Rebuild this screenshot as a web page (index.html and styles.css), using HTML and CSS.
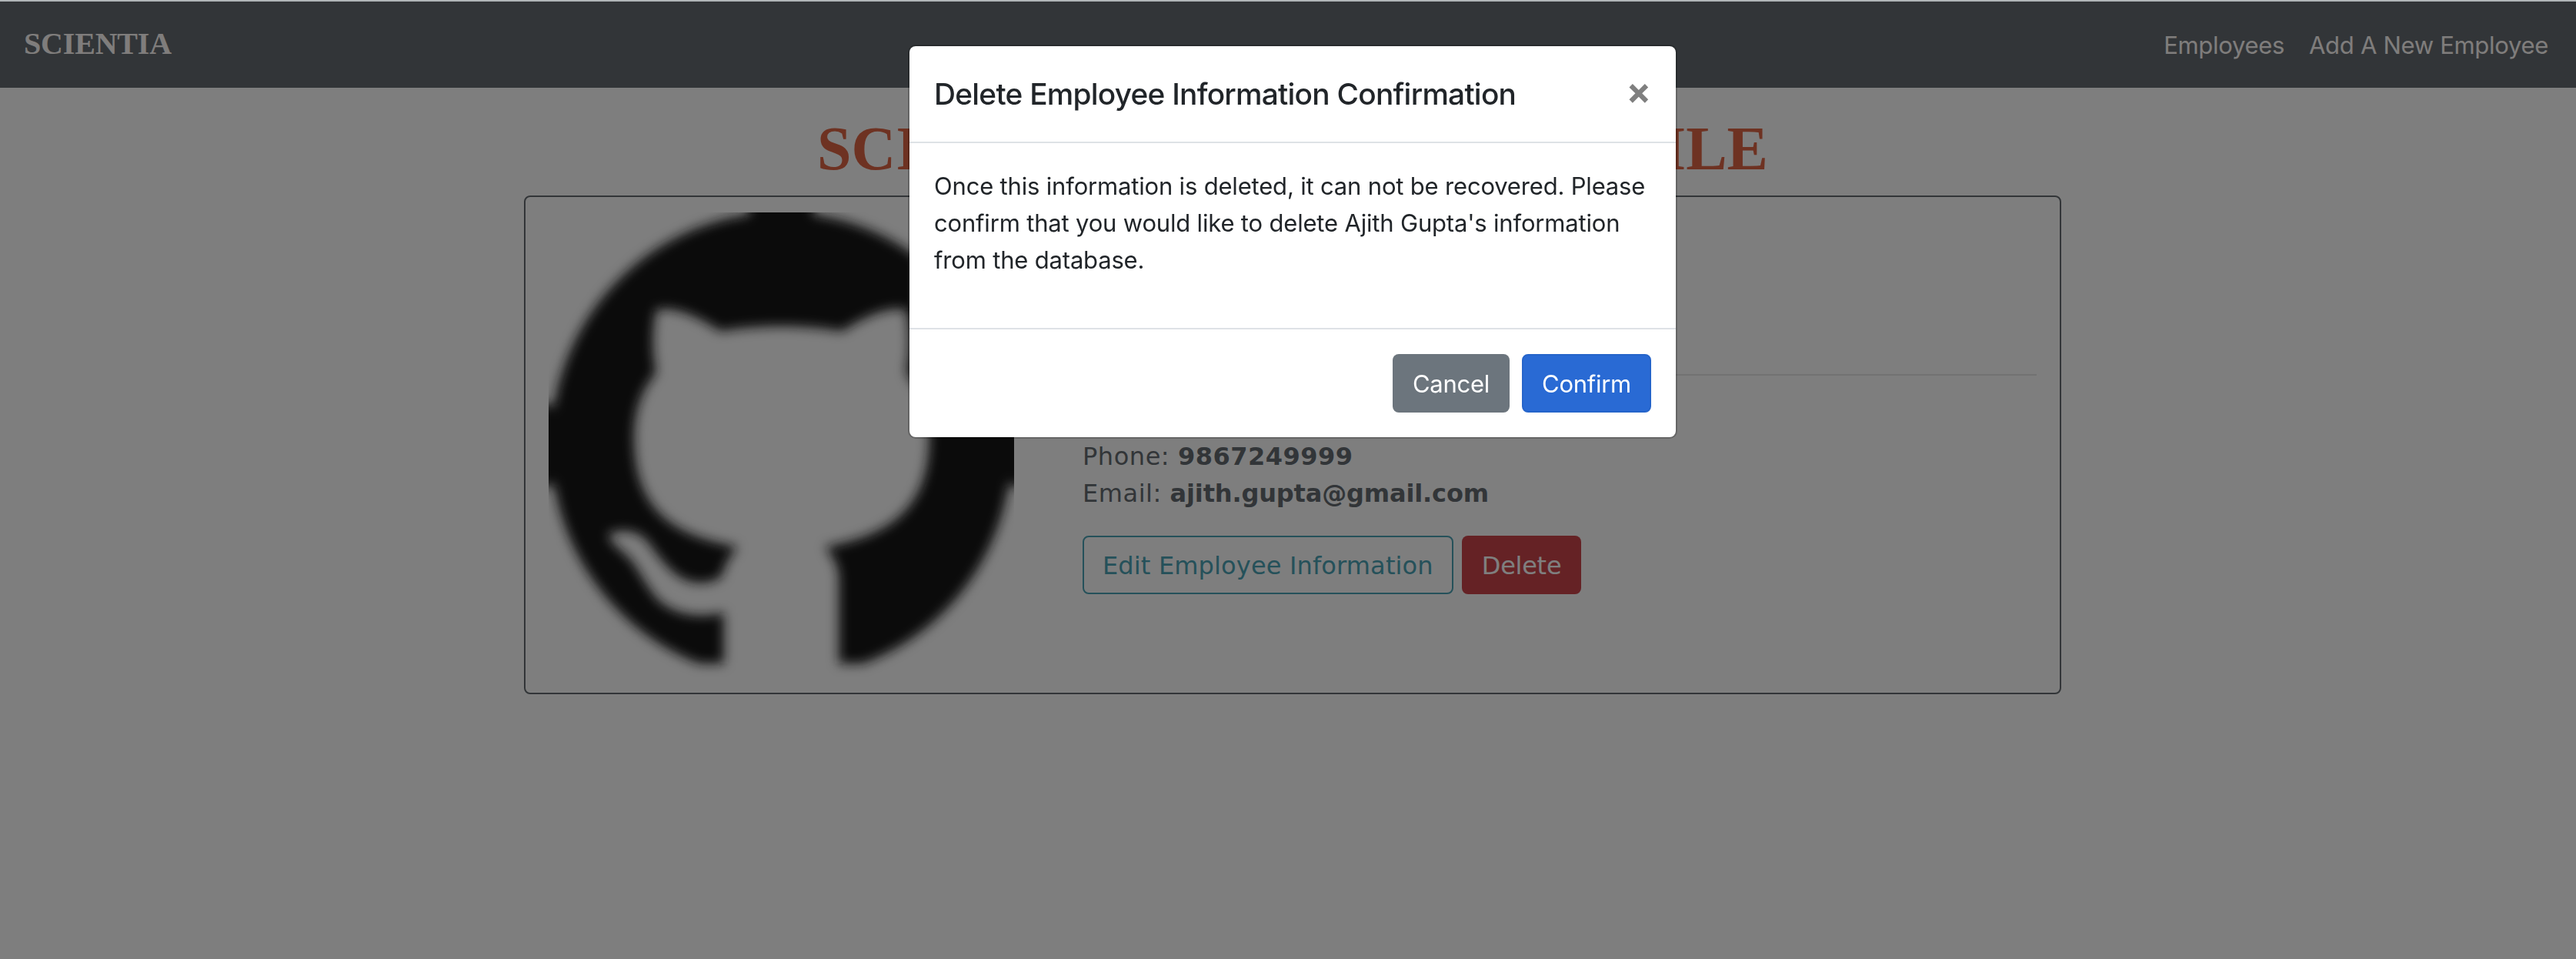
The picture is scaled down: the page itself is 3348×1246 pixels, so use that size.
FILE: index.html
```html
<!DOCTYPE html>
<html lang="en">
<head>
<meta charset="utf-8">
<title>Scientia</title>
<link rel="stylesheet" href="styles.css">
</head>
<body>
<nav class="navbar">
  <a class="brand">SCIENTIA</a>
  <div class="nav-links"><a>Employees</a><a>Add A New Employee</a></div>
</nav>
<main class="container">
  <h1 class="page-title">SCIENTIA EMPLOYEE PROFILE</h1>
  <section class="card">
    <svg class="avatar" viewBox="0 0 16 16" role="img">
      <defs><filter id="soft" filterUnits="userSpaceOnUse" x="-2" y="-2" width="20" height="20"><feGaussianBlur stdDeviation="0.2"/></filter></defs>
      <g filter="url(#soft)">
        <path d="M8 0C3.58 0 .08 3.58.08 8c0 3.5 2.2 6.4 5.1 7.5H6.02V13.75C5.2 13.95 4.4 13.85 3.8 13.35 3.3 12.8 3.1 12.2 2.7 11.8 2.35 11.5 2.1 11.3 2.05 11.05 2.4 10.9 3 10.85 3.4 11.3 3.8 11.85 4.15 12.35 4.65 12.6 5.1 12.8 5.6 12.75 5.95 12.5 6.05 12.1 6.25 11.75 6.5 11.5 4.75 11.15 2.94 10.6 2.94 7.75 2.94 6.8 3.2 6.1 3.7 5.5 3.55 4.8 3.55 4.1 3.7 3.35 4.3 3.2 5.2 3.6 5.9 4.08 7.2 3.85 8.8 3.85 10.1 4.08 10.8 3.6 11.7 3.2 12.3 3.35 12.45 4.1 12.45 4.8 12.3 5.5 12.8 6.1 13.08 6.8 13.08 7.75 13.08 10.5 11.3 11.15 9.5 11.5 9.8 11.8 9.98 12.2 9.98 12.6V15.5H10.8C13.8 14.4 15.92 11.5 15.92 8 15.92 3.58 12.42 0 8 0z"/>
        <path d="M-1 6.6H.15V9.4H-1zM15.85 6.6H17V9.4H15.85zM6.9-1H9.1V.15H6.9z"/>
      </g>
    </svg>
    <div class="details">
      <hr class="rule">
      <p>Phone: <b class="phone">9867249999</b></p>
      <p>Email: <b class="email">ajith.gupta@gmail.com</b></p>
      <div class="actions"><a class="btn btn-outline">Edit Employee Information</a><a class="btn btn-danger">Delete</a></div>
    </div>
  </section>
</main>
<div class="backdrop">
  <div class="modal">
    <header class="modal-header"><h5>Delete Employee Information Confirmation</h5><span class="close">×</span></header>
    <div class="modal-body"><p>Once this information is deleted, it can not be recovered. Please confirm that you would like to delete Ajith Gupta's information from the database.</p></div>
    <footer class="modal-footer"><button class="btn btn-secondary">Cancel</button><button class="btn btn-primary">Confirm</button></footer>
  </div>
</div>
</body>
</html>
```
FILE: styles.css
```css
* { box-sizing: border-box; }
body {
  margin: 0;
  min-height: 1246px;
  border-top: 2px solid #b0b5b7;
  background: #fcfcfc;
  color: #212529;
  font: 31px/48px Inter, "Liberation Sans", sans-serif;
  letter-spacing: -.18px;
  overflow: hidden;
}
h1, h5, p { margin: 0; }
.navbar {
  height: 112px;
  padding: 0 36px 0 31px;
  background: #646b70;
  color: #fffaf8;
  display: flex;
  align-items: center;
  justify-content: space-between;
}
.brand {
  padding-bottom: 3px;
  font: bold 40px/60px "Liberation Serif", serif;
}
.nav-links { display: flex; gap: 32px; padding-top: 2px; letter-spacing: -.3px; }
.container { width: 1998px; margin-left: 681px; }
.page-title {
  height: 140px;
  padding-top: 31px;
  color: #dd6444;
  font: bold 80px/96px "Liberation Serif", serif;
  letter-spacing: 0;
  text-align: center;
  white-space: nowrap;
}
.card {
  height: 648px;
  padding: 20px 30px;
  border: 2px solid #646b70;
  border-radius: 8px;
  display: flex;
  gap: 89px;
}
.avatar { width: 605px; height: 605px; fill: #141414; overflow: hidden; flex: none; }
.details {
  flex: 1;
  padding-top: 210px;
  color: #646b70;
  font-family: "DejaVu Sans", sans-serif;
  font-size: 32px;
  letter-spacing: .55px;
}
.phone { letter-spacing: .48px; }
.email { letter-spacing: -.15px; }
.rule { margin: 0 0 81px; border: 0; height: 2px; background: #e4e4e4; }
.actions { display: flex; gap: 11px; margin-top: 31px; }
.btn {
  height: 76px;
  padding: 13px 24px 11px;
  border: 2px solid transparent;
  border-radius: 8px;
  color: #fff;
  font: inherit;
  line-height: 48px;
  letter-spacing: -.27px;
  white-space: nowrap;
}
.btn-outline { border-color: #4ba2b4; color: #4ba2b4; letter-spacing: .15px; }
.btn-danger { background: #ca454b; }
.btn-secondary { background: #6c757d; }
.btn-primary { background: #296ad4; border-color: #2564ca; }
.backdrop {
  position: fixed;
  inset: 2px 0 0;
  padding-top: 56px;
  background: rgba(0, 0, 0, .5);
}
.modal {
  width: 1000px;
  height: 512px;
  margin-left: 1180px;
  border: 2px solid rgba(0, 0, 0, .2);
  border-radius: 10px;
  background: #fff;
  background-clip: padding-box;
}
.modal-header {
  height: 126px;
  padding: 32px;
  border-bottom: 2px solid #dee2e6;
  display: flex;
  justify-content: space-between;
}
.modal-header h5 {
  font-size: 38.8px;
  line-height: 60px;
  font-weight: 550;
  letter-spacing: -.74px;
  white-space: nowrap;
}
.close { font-size: 48px; font-weight: 700; line-height: 52px; color: #7f7f7f; }
.modal-body { height: 240px; padding: 32px; }
.modal-footer {
  border-top: 2px solid #dee2e6;
  padding: 32px;
  display: flex;
  justify-content: flex-end;
  gap: 16px;
}
```
